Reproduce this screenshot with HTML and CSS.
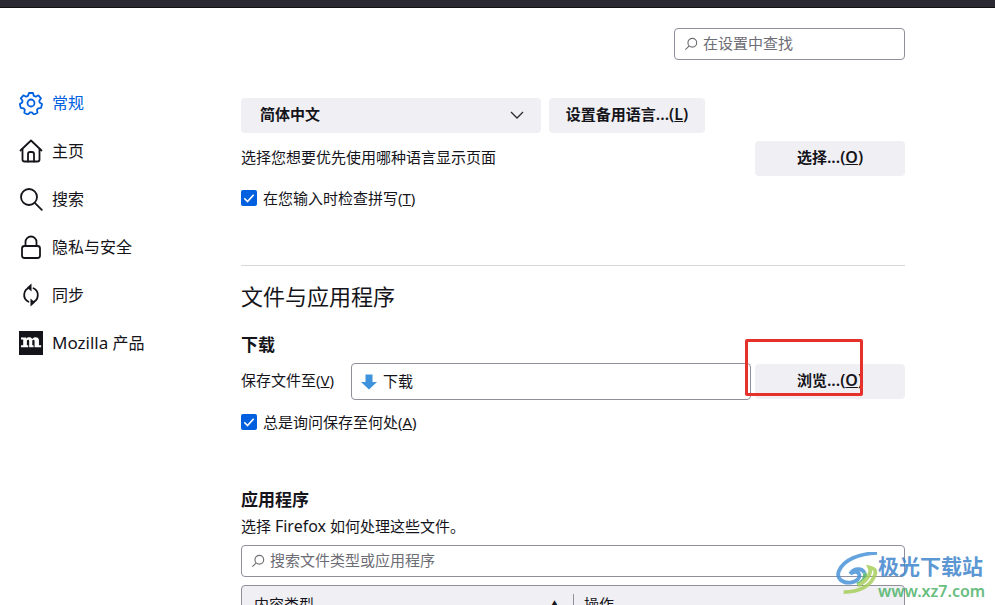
FILE: index.html
```html
<!DOCTYPE html>
<html lang="zh-CN">
<head>
  <meta charset="UTF-8">
  <title>设置</title>
  <link rel="stylesheet" href="styles.css">
</head>
<body>
<div class="topbar"></div>
<div class="page">
  <!-- 左侧导航 -->
  <nav class="nav">
    <div class="nav-item active">
      <svg class="nav-icon" viewBox="0 0 24 24" fill="none" stroke="currentColor" stroke-width="1.8" stroke-linejoin="round">
        <path d="M10 2h4l.8 2.9 1.9.8 2.7-1.4 2.6 3-1.7 2.5.3 1.7 2.4 1.5-.9 3.900-2.900.4-1.200 1.600.5 2.900-3.600 1.700-2-2.200h-2l-2 2.200-3.600-1.700.5-2.900-1.200-1.600-2.900-.4-.9-3.900 2.400-1.500.3-1.700-1.700-2.500 2.600-3 2.700 1.400 1.900-.8z"/>
        <circle cx="12" cy="12" r="3.500"/>
      </svg>
      <span>常规</span>
    </div>
    <div class="nav-item">
      <svg class="nav-icon" viewBox="0 0 24 24" fill="none" stroke="currentColor" stroke-width="1.800" stroke-linejoin="round" stroke-linecap="round">
        <path d="M1.500 11.500 12 1.500l10.500 10"/>
        <path d="M3.500 10v10.500a2 2 0 0 0 2 2h13a2 2 0 0 0 2-2V10"/>
        <path d="M9 22.500V15a2 2 0 0 1 2-2h2a2 2 0 0 1 2 2v7.500"/>
      </svg>
      <span>主页</span>
    </div>
    <div class="nav-item">
      <svg class="nav-icon" viewBox="0 0 24 24" fill="none" stroke="currentColor" stroke-width="1.800" stroke-linecap="round">
        <circle cx="10" cy="10" r="8"/>
        <path d="m15.800 15.800 7 7"/>
      </svg>
      <span>搜索</span>
    </div>
    <div class="nav-item">
      <svg class="nav-icon" viewBox="0 0 24 24" fill="none" stroke="currentColor" stroke-width="1.800">
        <rect x="3" y="11" width="18" height="12" rx="2.500"/>
        <path d="M6.500 11V7a5.500 5.500 0 0 1 11 0v4"/>
      </svg>
      <span>隐私与安全</span>
    </div>
    <div class="nav-item">
      <svg class="nav-icon" viewBox="0 0 24 24" fill="none" stroke="currentColor" stroke-width="1.800" stroke-linecap="round">
        <path d="M9.500 18.700A7.500 7.500 0 0 1 11 4.600"/>
        <path d="M14.500 5.300A7.500 7.500 0 0 1 13 19.400"/>
        <path d="M12.500.5v8L8 4.500z" fill="currentColor" stroke="none"/>
        <path d="M11.500 23.500v-8l4.500 4z" fill="currentColor" stroke="none"/>
      </svg>
      <span>同步</span>
    </div>
    <div class="nav-item">
      <svg class="nav-icon" viewBox="0 0 24 24">
        <rect width="24" height="24" fill="#15141a"/>
        <path transform="translate(-.3 -3.500) scale(1.150 1.100)" fill="#fff" d="M2 9h4.500v1.200C7.300 9.300 8.200 8.900 9.200 8.900c1.200 0 2.100.5 2.500 1.500.9-1 1.900-1.500 3-1.500 1.800 0 2.900 1 2.900 3v4.300h1.900V18h-5.700v-5.500c0-.9-.3-1.300-.9-1.300-.4 0-.8.200-1.100.6v4.400h1.100V18H9.100v-5.500c0-.9-.3-1.300-.9-1.300-.4 0-.8.200-1.100.6v4.400h1.200V18H2v-1.800h1.900v-5.400H2z"/>
      </svg>
      <span><span class="latin">Mozilla</span> 产品</span>
    </div>
  </nav>

  <main class="main">
    <div class="top-search">
      <div class="search-box small">
        <svg class="search-icon" viewBox="0 0 16 16" fill="none" stroke="#6f6f74" stroke-width="1.300"><circle cx="9.500" cy="6.500" r="5"/><path d="M6 10.200 1.500 14.500"/></svg>
        <span>在设置中查找</span>
      </div>
    </div>

    <div class="lang-row">
      <div class="select">
        <span>简体中文</span>
        <svg class="chevron" viewBox="0 0 14 8" fill="none" stroke="#2b2a33" stroke-width="1.300"><path d="m1 1 6 6 6-6"/></svg>
      </div>
      <button class="btn btn-alt">设置备用语言<span class="btn-latin">...(<u>L</u>)</span></button>
    </div>
    <div class="spread-row">
      <span>选择您想要优先使用哪种语言显示页面</span>
      <button class="btn btn-wide">选择<span class="btn-latin">...(<u>O</u>)</span></button>
    </div>
    <label class="check-row">
      <svg class="check" viewBox="0 0 16 16"><rect width="16" height="16" rx="2" fill="#0060df"/><path d="m3.300 8.300 3.200 3.200 6.200-6.800" fill="none" stroke="#fff" stroke-width="1.600"/></svg>
      <span>在您输入时检查拼写(<u>T</u>)</span>
    </label>

    <hr class="divider">

    <h1 class="section-title">文件与应用程序</h1>

    <h2 class="sub-title">下载</h2>
    <div class="save-row">
      <span class="save-label">保存文件至(<u>V</u>)</span>
      <div class="path-box">
        <svg class="arrow" viewBox="0 0 16 16"><path fill="#3f93dc" d="M4.500.5h7V8H16l-8 7.500L0 8h4.500z"/></svg>
        <span>下载</span>
      </div>
      <button class="btn btn-wide">浏览<span class="btn-latin">...(<u>O</u>)</span></button>
    </div>
    <label class="check-row">
      <svg class="check" viewBox="0 0 16 16"><rect width="16" height="16" rx="2" fill="#0060df"/><path d="m3.300 8.300 3.200 3.200 6.200-6.800" fill="none" stroke="#fff" stroke-width="1.600"/></svg>
      <span>总是询问保存至何处(<u>A</u>)</span>
    </label>

    <h2 class="sub-title apps-title">应用程序</h2>
    <p class="apps-desc">选择 <span class="latin-small">Firefox</span> 如何处理这些文件。</p>
    <div class="search-box wide">
      <svg class="search-icon" viewBox="0 0 16 16" fill="none" stroke="#6f6f74" stroke-width="1.300"><circle cx="9.500" cy="6.500" r="5"/><path d="M6 10.200 1.500 14.500"/></svg>
      <span>搜索文件类型或应用程序</span>
    </div>
    <div class="table-head">
      <div class="col-type"><span>内容类型</span><span class="sort">▲</span></div>
      <div class="col-action">操作</div>
    </div>
  </main>
</div>

<!-- 截图上的标注和水印 -->
<div class="red-mark"></div>
<div class="watermark">
  <svg class="wm-logo" viewBox="0 0 44 44" fill="none">
    <path d="M43 1C24 2 8 8 3 20c-3 8 4 13 12 12 7-1 11-5 9-9-1-3-6-3-9 0 3-6 12-7 15-1" stroke="#4a94d8" stroke-width="4"/>
    <path d="M30 22c2 5-2 10-8 12" stroke="#4fb36b" stroke-width="4"/>
    <path d="M8 42c16 0 29-6 33-19 1-4-1-6-6-7 3 6-3 15-12 19" stroke="#a8cf5c" stroke-width="4"/>
  </svg>
  <div class="wm-text">
    <div class="wm-name">极光下载站</div>
    <div class="wm-url">www.xz7.com</div>
  </div>
</div>
</body>
</html>
```

FILE: styles.css
```css
* {
  margin: 0;
  padding: 0;
  box-sizing: border-box;
}

html, body {
  width: 100%;
  height: 100%;
  overflow: hidden;
  background-color: #fff;
}

body {
  font-family: "Noto Sans", "Noto Sans CJK SC", sans-serif;
  font-size: 15px;
  color: #15141a;
}

.topbar {
  height: 8px;
  background-color: #2b2a33;
  border-bottom: 1px solid #111;
}

.page {
  display: flex;
}

/* 左侧导航 */
.nav {
  width: 241px;
  flex-shrink: 0;
  padding: 71px 0 0 19px;
}

.nav-item {
  display: flex;
  align-items: center;
  gap: 9px;
  height: 48px;
  font-size: 16px;
}

/* 文字比图标略靠上 */
.nav-item > span {
  margin-bottom: 2px;
}

.nav-item.active {
  color: #0061e0;
}

.nav-icon {
  width: 24px;
  height: 24px;
  flex-shrink: 0;
}

.latin {
  font-size: 17px;
}

.latin-small {
  font-size: 16px;
}

/* 右侧内容 */
.main {
  width: 664px;
}

.top-search {
  display: flex;
  justify-content: flex-end;
  padding-top: 20px;
}

.search-box {
  display: flex;
  align-items: center;
  gap: 5px;
  height: 32px;
  padding-left: 9px;
  border: 1px solid #8f8f9d;
  border-radius: 4px;
  color: #6d6d75;
}

.search-box span {
  margin-bottom: 4px;
}

.search-box.small {
  width: 231px;
}

.search-box.wide {
  width: 664px;
  margin-top: 7px;
}

.search-icon {
  width: 14px;
  height: 14px;
}

.lang-row {
  display: flex;
  gap: 8px;
  margin-top: 38px;
}

.select {
  display: flex;
  align-items: center;
  justify-content: space-between;
  width: 300px;
  height: 35px;
  padding: 0 17px 0 19px;
  border-radius: 4px;
  background-color: #f0f0f4;
  font-weight: 600;
}

.select span {
  margin-bottom: 4px;
}

.chevron {
  width: 14px;
  height: 8px;
  margin-bottom: 2px;
}

.btn {
  height: 35px;
  padding-bottom: 3px;
  border: 0;
  border-radius: 4px;
  background-color: #f0f0f4;
  color: #15141a;
  font-family: inherit;
  font-size: 15px;
  font-weight: 600;
}

.btn-latin {
  font-size: 16px;
}

.btn-alt {
  width: 156px;
}

.btn-wide {
  width: 150px;
  flex-shrink: 0;
}

.spread-row {
  display: flex;
  align-items: center;
  justify-content: space-between;
  margin-top: 8px;
}

.spread-row > span {
  margin-bottom: 4px;
}

.check-row {
  display: flex;
  align-items: center;
  gap: 6px;
  height: 20px;
  margin-top: 12px;
}

.check-row span {
  margin-bottom: 2px;
}

.check {
  width: 16px;
  height: 16px;
  flex-shrink: 0;
}

.divider {
  border: 0;
  border-top: 1px solid #d7d7db;
  margin-top: 57px;
}

.section-title {
  margin-top: 15px;
  font-size: 22px;
  font-weight: 400;
  line-height: 30px;
}

.sub-title {
  margin-top: 22px;
  font-size: 17px;
  font-weight: 700;
  line-height: 24px;
}

.save-row {
  display: flex;
  align-items: center;
  margin-top: 6px;
}

.save-label {
  width: 110px;
  flex-shrink: 0;
  margin-bottom: 4px;
}

.path-box {
  display: flex;
  align-items: center;
  gap: 6px;
  width: 400px;
  height: 37px;
  margin-right: 4px;
  padding-left: 9px;
  border: 1px solid #8f8f9d;
  border-radius: 4px;
}

.path-box span {
  margin-bottom: 2px;
}

.arrow {
  width: 16px;
  height: 16px;
}

.apps-title {
  margin-top: 56px;
}

.apps-desc {
  margin-top: 2px;
  line-height: 24px;
}

.table-head {
  display: flex;
  height: 40px;
  margin-top: 8px;
  padding-top: 8px;
  border: 1px solid #8f8f9d;
  border-radius: 4px 4px 0 0;
  background-color: #f0f0f4;
  line-height: 20px;
}

.col-type {
  display: flex;
  justify-content: space-between;
  width: 332px;
  padding: 0 15px 0 12px;
  border-right: 1px solid #8f8f9d;
}

.col-action {
  padding-left: 10px;
}

.sort {
  font-size: 7px;
}

/* 标注 */
.red-mark {
  position: absolute;
  left: 745px;
  top: 339px;
  width: 118px;
  height: 57px;
  border: 3px solid #e5302c;
  border-radius: 2px;
}

.watermark {
  position: absolute;
  left: 836px;
  top: 552px;
  display: flex;
  opacity: 0.85;
}

.wm-logo {
  width: 42px;
  height: 42px;
}

.wm-text {
  white-space: nowrap;
}

.wm-name {
  font-size: 21px;
  font-weight: 700;
  line-height: 28px;
  color: #3f86cc;
}

.wm-url {
  font-size: 16px;
  font-weight: 600;
  line-height: 22px;
  color: #4fb36b;
}
```
